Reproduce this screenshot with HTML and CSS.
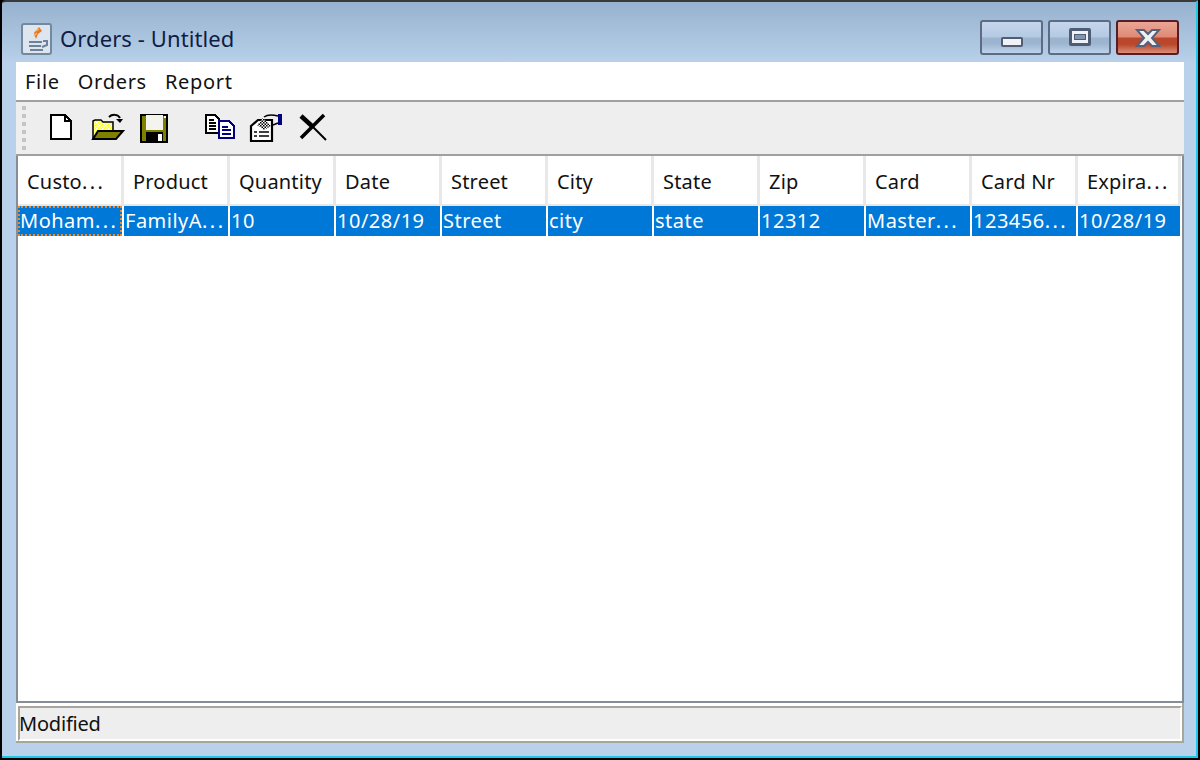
FILE: index.html
```html
<!DOCTYPE html>
<html lang="en">
<head>
    <meta charset="UTF-8">
    <title>Orders - Untitled</title>
    <link rel="stylesheet" href="styles.css">
</head>
<body>
    <div class="window">
        <div class="titlebar">
            <svg class="app-icon" width="32" height="32" viewBox="0 0 32 32">
                <rect x="1" y="1" width="29" height="30" rx="2" fill="#dde5ee" stroke="#74889e" stroke-width="2"/>
                <path d="M18 4 L13 10 L15 16 L17 11 L21 8 Z" fill="#e8761c"/>
                <path d="M15 8 L18 6 M13 13 L16 10" stroke="#f7b06a" stroke-width="1.5"/>
                <path d="M8 19 H21 M8 23 H20 M9 27 H22" stroke="#6d8299" stroke-width="2"/>
                <path d="M22 18 H26 V22 L21 24" fill="none" stroke="#6d8299" stroke-width="2"/>
            </svg>
            <span class="title">Orders - Untitled</span>
            <div class="controls">
                <div class="ctrl">
                    <span class="min-glyph"></span>
                </div>
                <div class="ctrl">
                    <span class="max-glyph"></span>
                </div>
                <div class="ctrl ctrl-close">
                    <svg width="26" height="20" viewBox="0 0 26 20">
                        <path d="M2 2 H9 L13 6 L17 2 H24 L17 10 L24 18 H17 L13 14 L9 18 H2 L9 10 Z" fill="#eef0f3" stroke="#56607a" stroke-width="2"/>
                    </svg>
                </div>
            </div>
        </div>
        <div class="client">
            <div class="menubar">
                <span class="menu-item">File</span>
                <span class="menu-item">Orders</span>
                <span class="menu-item">Report</span>
            </div>
            <div class="toolbar">
                <div class="gripper">
                    <span></span><span></span><span></span><span></span><span></span><span></span>
                </div>
                <div class="tool-group">
                    <div class="tool">
                        <svg width="36" height="30" viewBox="0 0 36 30" shape-rendering="crispEdges">
                            <path d="M8 2 H22 L28 8 V26 H8 Z" fill="#fff" stroke="#000" stroke-width="2"/>
                            <path d="M22 2 V8 H28" fill="none" stroke="#000" stroke-width="1.5"/>
                        </svg>
                    </div>
                    <div class="tool">
                        <svg width="36" height="30" viewBox="0 0 36 30">
                            <defs>
                                <pattern id="dither" width="3" height="3" patternUnits="userSpaceOnUse">
                                    <rect width="3" height="3" fill="#ffff00"/>
                                    <rect width="1.5" height="1.5" fill="#fff"/>
                                    <rect x="1.5" y="1.5" width="1.5" height="1.5" fill="#fff"/>
                                </pattern>
                                <pattern id="dither-gray" width="3" height="3" patternUnits="userSpaceOnUse">
                                    <rect width="3" height="3" fill="#fff"/>
                                    <rect width="1.5" height="1.5" fill="#000"/>
                                    <rect x="1.5" y="1.5" width="1.5" height="1.5" fill="#000"/>
                                </pattern>
                            </defs>
                            <path d="M3 8 L5 7 H11 L13 9 H23 V25 H3 Z" fill="url(#dither)" stroke="#000" stroke-width="1.5"/>
                            <path d="M3 26 L8 18 H33 L26 26 Z" fill="#808000" stroke="#000" stroke-width="2"/>
                            <path d="M19 4 C22 1 28 1 30 5" fill="none" stroke="#000" stroke-width="2"/>
                            <path d="M26 6 H33 L30 10 Z" fill="#000"/>
                        </svg>
                    </div>
                    <div class="tool">
                        <svg width="36" height="30" viewBox="0 0 36 30" shape-rendering="crispEdges">
                            <rect x="5" y="2" width="26" height="27" fill="#808000" stroke="#000" stroke-width="2"/>
                            <rect x="10" y="2" width="17" height="15" fill="#f4f4ee"/>
                            <rect x="10" y="19" width="17" height="10" fill="#000"/>
                            <rect x="22" y="21" width="4" height="7" fill="#fff"/>
                            <rect x="28" y="3" width="2" height="2" fill="#fff"/>
                        </svg>
                    </div>
                </div>
                <div class="tool-group">
                    <div class="tool">
                        <svg width="36" height="30" viewBox="0 0 36 30" shape-rendering="crispEdges">
                            <path d="M4 2 H13 L17 6 V20 H4 Z" fill="#fff" stroke="#000" stroke-width="2"/>
                            <path d="M7 7 H12 M7 10 H14 M7 13 H14 M7 16 H14" stroke="#000" stroke-width="1.5"/>
                            <path d="M17 8 H27 L32 13 V25 H17 Z" fill="#fff" stroke="#000080" stroke-width="2"/>
                            <path d="M20 14 H26 M20 17 H29 M20 21 H29" stroke="#000080" stroke-width="1.5"/>
                        </svg>
                    </div>
                    <div class="tool">
                        <svg width="36" height="30" viewBox="0 0 36 30">
                            <rect x="30" y="1" width="4" height="11" fill="#000080"/>
                            <path d="M16 4 C20 1 26 2 30 3 M30 10 L25 12" fill="none" stroke="#000" stroke-width="1.5"/>
                            <path d="M3 13 L10 7 H24 V28 H3 Z" fill="#fff" stroke="#000" stroke-width="2.2"/>
                            <path d="M9 12 L15 5 L23 13 L16 17 Z" fill="url(#dither-gray)"/>
                            <path d="M6 19 H9 M11 19 H21 M6 23 H9 M11 23 H21" stroke="#000" stroke-width="1.6"/>
                        </svg>
                    </div>
                    <div class="tool">
                        <svg width="36" height="30" viewBox="0 0 36 30">
                            <path d="M6 25 L29 2" stroke="#000" stroke-width="3.5"/>
                            <path d="M6 3 L18 14" stroke="#000" stroke-width="4.5"/>
                            <path d="M18 14 L31 27" stroke="#000" stroke-width="2"/>
                        </svg>
                    </div>
                </div>
            </div>
            <div class="table-area">
                <div class="table-head">
                    <div class="th">Custo<span class="dots">...</span></div>
                    <div class="th">Product</div>
                    <div class="th">Quantity</div>
                    <div class="th">Date</div>
                    <div class="th">Street</div>
                    <div class="th">City</div>
                    <div class="th">State</div>
                    <div class="th">Zip</div>
                    <div class="th">Card</div>
                    <div class="th">Card Nr</div>
                    <div class="th">Expira<span class="dots">...</span></div>
                </div>
                <div class="table-row">
                    <div class="td td-focus">Moham<span class="dots">...</span></div>
                    <div class="td">FamilyA<span class="dots">...</span></div>
                    <div class="td">10</div>
                    <div class="td">10/28/19</div>
                    <div class="td">Street</div>
                    <div class="td">city</div>
                    <div class="td">state</div>
                    <div class="td">12312</div>
                    <div class="td">Master<span class="dots">...</span></div>
                    <div class="td">123456<span class="dots">...</span></div>
                    <div class="td td-last">10/28/19</div>
                </div>
            </div>
            <div class="statusbar">
                <div class="status-inner">Modified</div>
            </div>
        </div>
    </div>
</body>
</html>
```

FILE: styles.css
```css
html, body {
    margin: 0;
    padding: 0;
}
body {
    width: 1200px;
    height: 760px;
    background-color: #000;
    overflow: hidden;
    font-family: "Noto Sans", Arial, sans-serif;
    font-size: 20px;
    color: #111;
}
.window {
    box-sizing: border-box;
    width: 1196px;
    height: 758px;
    margin-left: 2px;
    border-top: 2px solid #3a3a3a;
    border-right: 2px solid #1fc6e8;
    border-bottom: 2px solid #1fc6e8;
    border-top-left-radius: 4px;
    background: linear-gradient(#97b2cf 0, #b9d1ea 62px) #b9d1ea;
    padding: 0 12px 13px 14px;
    display: flex;
    flex-direction: column;
}
.titlebar {
    height: 60px;
    flex: none;
    display: flex;
    align-items: flex-start;
}
.app-icon {
    margin: 21px 7px 0 5px;
}
.title {
    margin-top: 21px;
    font-size: 22px;
    letter-spacing: 0.1px;
    color: #101c44;
}
.controls {
    margin-left: auto;
    margin-top: 18px;
    margin-right: 5px;
    display: flex;
    gap: 5px;
}
.ctrl {
    box-sizing: border-box;
    width: 63px;
    height: 35px;
    border: 2px solid #5d6b85;
    border-radius: 3px;
    background: linear-gradient(#c4d6ec 0, #b4cae3 48%, #9cb3cd 52%, #9db5d0 70%, #bed3ea 100%);
    display: flex;
    align-items: center;
    justify-content: center;
}
.ctrl-close {
    border-color: #551c2a;
    background: linear-gradient(#eba695 0, #de8a76 48%, #b9472b 52%, #b9472b 72%, #dc8d78 100%);
}
.min-glyph {
    box-sizing: border-box;
    width: 22px;
    height: 10px;
    margin-top: 8px;
    border: 2px solid #4f5c74;
    border-radius: 2px;
    background-color: #f0f2f5;
}
.max-glyph {
    box-sizing: border-box;
    width: 22px;
    height: 18px;
    margin-bottom: 2px;
    border: 3px solid #4f5c74;
    border-radius: 2px;
    background-color: #eef1f5;
    display: flex;
    align-items: center;
    justify-content: center;
}
.max-glyph::after {
    content: "";
    width: 10px;
    height: 4px;
    background-color: #7f96b2;
    border: 1px solid #4f5c74;
}
.client {
    flex: 1;
    display: flex;
    flex-direction: column;
    min-height: 0;
}
.menubar {
    height: 38px;
    flex: none;
    box-sizing: border-box;
    background-color: #fff;
    display: flex;
    align-items: center;
    padding-left: 9px;
    gap: 18px;
    letter-spacing: 0.7px;
}
.toolbar {
    height: 56px;
    flex: none;
    box-sizing: border-box;
    border-top: 2px solid #a0a0a0;
    border-bottom: 2px solid #a0a0a0;
    background-color: #eeeeee;
    display: flex;
    align-items: center;
}
.gripper {
    width: 16px;
    margin-left: 6px;
    display: flex;
    flex-direction: column;
    gap: 4px;
}
.gripper span {
    display: block;
    width: 4px;
    height: 4px;
    background-color: #c4c4c4;
}
.tool-group {
    display: flex;
    margin-right: 19px;
}
.tool {
    width: 46.5px;
    display: flex;
    justify-content: center;
}
.table-area {
    flex: 1;
    min-height: 0;
    background-color: #fff;
    border-left: 2px solid #868d96;
    border-right: 2px solid #868d96;
    border-bottom: 2px solid #868d96;
}
.table-head,
.table-row {
    display: grid;
    grid-template-columns: repeat(10, 106px) 103px;
}
.table-head {
    height: 50px;
}
.th {
    box-sizing: border-box;
    border-right: 3px solid #e8e8e8;
    border-bottom: 2px solid #e8e8e8;
    padding-left: 9px;
    padding-top: 12px;
    letter-spacing: 0.2px;
    white-space: nowrap;
    overflow: hidden;
}
.dots {
    letter-spacing: 2.4px;
}
.table-row {
    height: 30px;
}
.td {
    box-sizing: border-box;
    height: 30px;
    line-height: 29px;
    margin-right: 2px;
    padding-left: 1px;
    letter-spacing: 0.5px;
    background-color: #0078d7;
    color: #fff;
    white-space: nowrap;
    overflow: hidden;
}
.td-last {
    margin-right: 1px;
}
.td-focus {
    border: 2px dotted #f08a24;
    line-height: 25px;
    padding-left: 0;
}
.statusbar {
    flex: none;
    height: 40px;
    box-sizing: border-box;
    background-color: #fff;
    padding-left: 2px;
    padding-top: 3px;
    border-right: 2px solid #a8a59a;
    border-bottom: 2px solid #a8a59a;
}
.status-inner {
    box-sizing: border-box;
    height: 35px;
    background-color: #eeeeee;
    border-top: 2px solid #a8a59a;
    border-left: 2px solid #a8a59a;
    border-right: 2px solid #fff;
    border-bottom: 2px solid #fff;
    text-indent: -1px;
    line-height: 32px;
    letter-spacing: -0.2px;
    white-space: nowrap;
}
```
